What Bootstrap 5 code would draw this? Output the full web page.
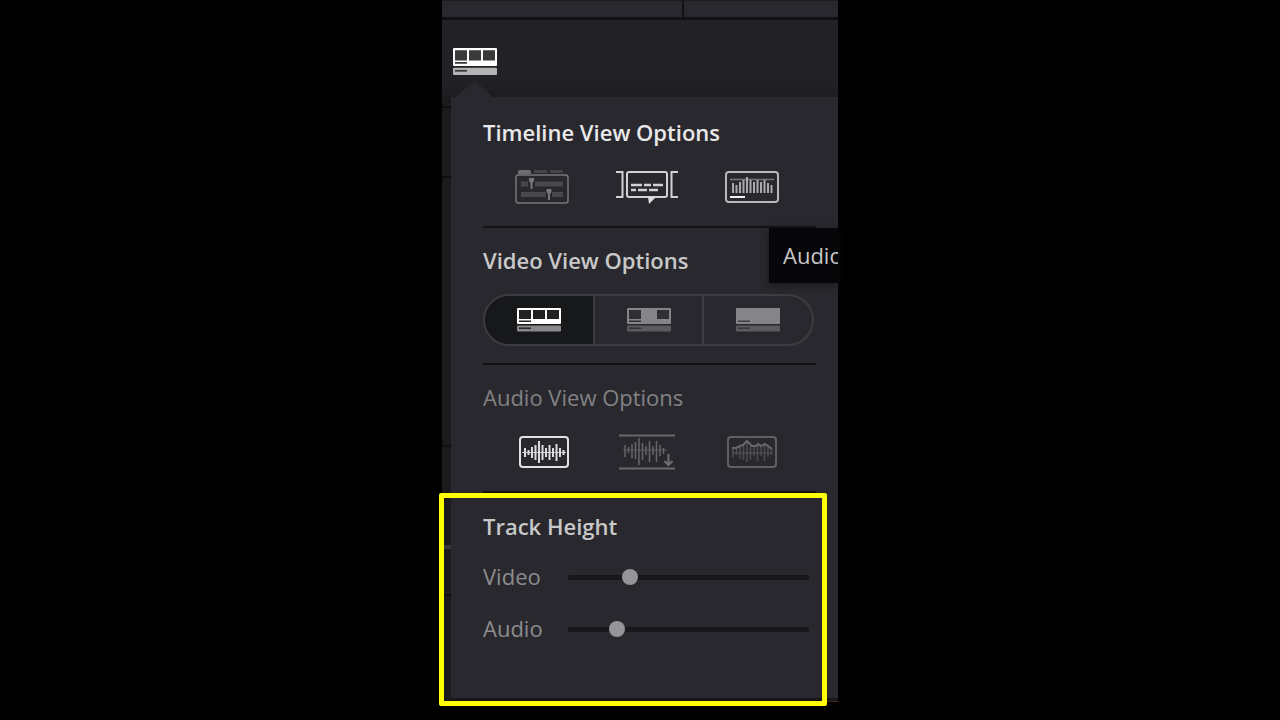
<!DOCTYPE html>
<html lang="en">
<head>
<meta charset="utf-8">
<meta name="viewport" content="width=device-width, initial-scale=1">
<title>Timeline View Options</title>
<link href="https://cdn.jsdelivr.net/npm/bootstrap@5.3.0/dist/css/bootstrap.min.css" rel="stylesheet">
<style>
  body { background: #000; color: #c8c8c9; font-family: "Open Sans", "Noto Sans", sans-serif; font-size: 22px; line-height: 30px; }
  svg { display: block; }
  button { background: none; border: 0; padding: 0; color: inherit; }
  .editor { max-width: 396px; background: #1b1b1e; border-bottom: 1px solid #4a2412; }
  .tab-strip { height: 20px; background: #29282e; border-bottom: 3px solid #111114; border-top: 1px solid #1c1c20; }
  .tab-strip div:first-child { flex: 0 0 61%; border-right: 2px solid #111114; }
  .toolbar { height: 77px; padding: 28px 11px 0; background: linear-gradient(#222126 75%, #1d1c20); }
  .gutter { width: 9px; padding-top: 9px; }
  .gutter div { border-top: 2px solid #101012; }
  .gutter .seam { border-top: 4px solid #39393c; }
  .panel { background: #29282e; padding: 0 22px 0 32px; border-bottom: 3px solid #17171a; }
  .panel-arrow { position: absolute; left: 4px; top: -17px; width: 39px; height: 18px; background: #29282e; clip-path: polygon(50% 0, 100% 100%, 0 100%); }
  .options { border-bottom: 2px solid #121214; padding-top: 17px; }
  .options:first-of-type { padding-top: 20px; }
  .options h2 { font-size: 22px; line-height: 30px; font-weight: 600; margin: 0 0 1px; }
  .options .dimmed { font-weight: 400; color: #828284; }
  .options .bright { color: #e9e9ea; }
  .icon-row { height: 78px; padding: 0 12px 0 6px; }
  .segments { height: 52px; margin: 19px 2px 17px 0; border: 2px solid #3d3c42; border-radius: 26px; overflow: hidden; }
  .segments button + button { border-left: 2px solid #3d3c42; }
  .segments .chosen { background: #171819; }
  .hover-tip { position: absolute; top: 0; right: -22px; width: 69px; line-height: 55px; padding-left: 14px; overflow: hidden; white-space: nowrap; background: #070709; color: #c8c8ca; box-shadow: -1px 3px 6px #1c1b20; }
  .track-height { padding: 18px 0 44px; border: 0; }
  .options.track-height h2 { margin-bottom: 9px; }
  .slider-row { height: 52px; color: #8c8c8e; padding-right: 7px; }
  .slider-row label { width: 85px; }
  .slider-row input { appearance: none; background: none; height: 18px; min-width: 0; margin: 2px 0 0; }
  .slider-row input::-webkit-slider-runnable-track { height: 5px; background: #18181a; border-radius: 2px; }
  .slider-row input::-webkit-slider-thumb { appearance: none; width: 16px; height: 16px; margin-top: -6px; border-radius: 50%; background: #959598; }
  .highlight { position: absolute; inset: 0 -11px -8px -44px; border: 5px solid #ff0; border-radius: 2px; pointer-events: none; }
</style>
</head>
<body class="min-vh-100">
<main class="editor mx-auto">
  <div class="tab-strip d-flex"><div></div><div></div></div>
  <div class="toolbar">
    <button type="button" aria-label="Timeline view options">
      <svg width="44" height="27" viewBox="0 0 44 24" preserveAspectRatio="none">
        <rect width="44" height="16" rx="1" fill="#fff"/>
        <path d="M2 2h12v9H2zM16 2h12v9H16zM30 2h12v9H30z" fill="#39393c"/>
        <path d="M2 12.500h12v1.500H2z" fill="#333"/>
        <rect y="17.500" width="44" height="6.500" rx="1" fill="#b4b4b4"/>
        <path d="M2 19.500h12v1.500H2z" fill="#333"/>
      </svg>
    </button>
  </div>
  <div class="d-flex">
    <div class="gutter">
      <div style="height:70px"></div>
      <div style="height:269px"></div>
      <div style="height:100px"></div>
      <div class="seam" style="height:49px"></div>
      <div></div>
    </div>
    <div class="panel flex-grow-1 position-relative">
      <span class="panel-arrow"></span>
      <section class="options">
        <h2 class="bright">Timeline View Options</h2>
        <div class="icon-row row g-0 align-items-center">
          <button class="col d-flex justify-content-center" type="button" aria-label="Stacked timelines">
            <svg width="54" height="36" viewBox="0 0 54 36">
              <path d="M3 5V3q0-2 2-2h9q2 0 2 2v2z" fill="#6e6e71"/>
              <path d="M19 1h13v3H19zM35 1h13v3H35z" fill="#454549"/>
              <rect x="1" y="6" width="52" height="28" rx="2.500" fill="none" stroke="#77777a" stroke-width="1.500"/>
              <path d="M6 15h7M20 15h28M6 25.500h25M37 25.500h11" stroke="#48484b" stroke-width="5"/>
              <path d="M16.500 10v10M34 20v11" stroke="#77777a" stroke-width="2"/>
              <path d="M14 9h5v3l-1.500 2h-2L14 12zM31.500 20h5v3l-1.500 2h-2l-1.500-2z" fill="#77777a"/>
            </svg>
          </button>
          <button class="col d-flex justify-content-center" type="button" aria-label="Subtitle tracks">
            <svg width="62" height="34" viewBox="0 -1 62 34">
              <g fill="none" stroke="#d2d2d4" stroke-width="2">
                <path d="M0 1h6.500v25H0M62 1h-6.500v25H62"/>
                <rect x="11" y="1" width="40" height="25" rx="2"/>
                <path d="M15 14h11M28 14h7M37 14h10M15 19h5M22 19h9M33 19h9" stroke-width="2.500"/>
              </g>
              <path d="M32 26h8l-7 7z" fill="#dededf"/>
            </svg>
          </button>
          <button class="col d-flex justify-content-center" type="button" aria-label="Audio waveforms">
            <svg width="54" height="32" viewBox="0 0 54 32">
              <rect x="1" y="1" width="52" height="30" rx="3" fill="none" stroke="#b8b8ba" stroke-width="2"/>
              <path d="M5 8.500h44" stroke="#77777a" stroke-width="1.500"/>
              <path d="M8 12v10M11.500 14v8M15 11v11M18.500 9v13M22 6v16M25.500 9v13M29 11v11M32.500 9v13M36 11v11M39.500 9v13M43 12v10M46.500 14v8" stroke="#aaaaad" stroke-width="2"/>
              <path d="M5 26h15" stroke="#f2f2f2" stroke-width="2"/>
            </svg>
          </button>
        </div>
      </section>
      <section class="options position-relative">
        <h2>Video View Options</h2>
        <div class="segments d-flex">
          <button class="chosen col d-flex align-items-center justify-content-center" type="button" aria-label="Filmstrip">
            <svg width="44" height="24" viewBox="0 0 44 24">
              <rect width="44" height="16" rx="1" fill="#fff"/>
              <path d="M2 2h12v9H2zM16 2h12v9H16zM30 2h12v9H30zM2 12.500h12v1.500H2z" fill="#222224"/>
              <rect y="17.500" width="44" height="6" rx="1" fill="#88888a"/>
              <path d="M2 19.500h12v1.500H2z" fill="#29292b"/>
            </svg>
          </button>
          <button class="col d-flex align-items-center justify-content-center" type="button" aria-label="Thumbnail">
            <svg width="44" height="24" viewBox="0 0 44 24">
              <rect width="44" height="16" rx="1" fill="#858587"/>
              <path d="M2 2h12v9H2zM30 2h12v9H30zM2 12.500h12v1.500H2z" fill="#303034"/>
              <rect y="17.500" width="44" height="6" rx="1" fill="#5b5b5e"/>
              <path d="M2 19.500h12v1.500H2z" fill="#333337"/>
            </svg>
          </button>
          <button class="col d-flex align-items-center justify-content-center" type="button" aria-label="Simple">
            <svg width="44" height="24" viewBox="0 0 44 24">
              <rect width="44" height="16" rx="1" fill="#858587"/>
              <path d="M2 12.500h12v1.500H2z" fill="#404044"/>
              <rect y="17.500" width="44" height="6" rx="1" fill="#5b5b5e"/>
              <path d="M2 19.500h12v1.500H2z" fill="#39393d"/>
            </svg>
          </button>
        </div>
        <span class="hover-tip" role="tooltip">Audio</span>
      </section>
      <section class="options">
        <h2 class="dimmed">Audio View Options</h2>
        <div class="icon-row row g-0 align-items-center">
          <button class="col d-flex justify-content-center" type="button" aria-label="Full waveform">
            <svg class="ms-1" width="50" height="32" viewBox="0 0 50 32">
              <rect x="1" y="1" width="48" height="30" rx="3" fill="none" stroke="#e2e2e3" stroke-width="2"/>
              <path d="M3 16.500h44" stroke="#c2c2c4"/>
              <path d="M6 12v9M9.500 14v5M13 11v11M16.500 9v15M20 5v22M23.500 9v15M27 12v9M30.500 9v15M34 12v9M37.500 8v17M41 12v9M44.500 14v5" stroke="#dcdcde" stroke-width="2"/>
            </svg>
          </button>
          <button class="col d-flex justify-content-center" type="button" aria-label="Non-rectified waveform">
            <svg width="56" height="36" viewBox="0 0 56 36">
              <path d="M0 1.500h56M0 34.500h56" stroke="#68686b" stroke-width="2"/>
              <path d="M4 16h44" stroke="#58585c"/>
              <path d="M6 11v12M9.500 13v6M13 10v14M16.500 8v17M20 4v27M23.500 9v17M27 12v9M30.500 7v21M34 12v9M37.500 7v21M41 11v11M44.500 14v6" stroke="#66666a" stroke-width="1.500"/>
              <path d="M49.500 20v11M45.500 27l4 4 4-4" fill="none" stroke="#707074" stroke-width="2"/>
            </svg>
          </button>
          <button class="col d-flex justify-content-center" type="button" aria-label="Waveform border">
            <svg width="50" height="32" viewBox="0 0 50 32">
              <rect x="1" y="1" width="48" height="30" rx="3" fill="none" stroke="#5f5f63" stroke-width="2"/>
              <path d="M6 12v9M9.500 12v7M13 10v13M16.500 9v15M20 6v20M23.500 9v15M27 11v9M30.500 9v16M34 11v9M37.500 9v16M41 11v10M44.500 13v6M5 17h41" stroke="#4d4d51" stroke-width="1.500"/>
              <path d="M5 12h4l4-2 3-1 4-4 5 5h4l2-2 3 2 4-2 7 5" fill="none" stroke="#68686c" stroke-width="2"/>
            </svg>
          </button>
        </div>
      </section>
      <section class="options track-height position-relative">
        <h2>Track Height</h2>
        <div class="slider-row d-flex align-items-center">
          <label for="video-height">Video</label>
          <input id="video-height" class="flex-grow-1" type="range" min="0" max="100" value="24">
        </div>
        <div class="slider-row d-flex align-items-center">
          <label for="audio-height">Audio</label>
          <input id="audio-height" class="flex-grow-1" type="range" min="0" max="100" value="18">
        </div>
        <div class="highlight"></div>
      </section>
    </div>
  </div>
</main>
<script src="https://cdn.jsdelivr.net/npm/bootstrap@5.3.0/dist/js/bootstrap.bundle.min.js"></script>
</body>
</html>
